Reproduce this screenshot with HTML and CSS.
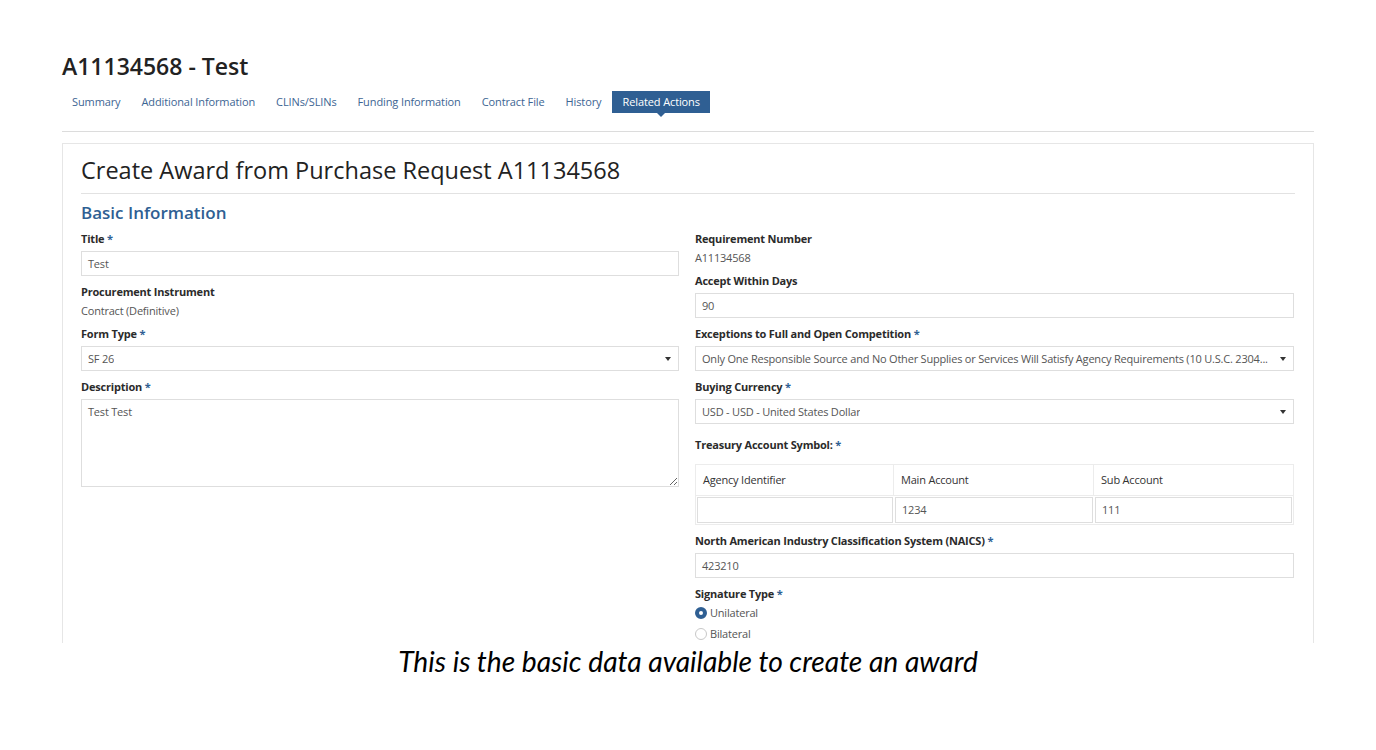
FILE: index.html
```html
<!DOCTYPE html>
<html lang="en">
<head>
<meta charset="utf-8">
<title>A11134568 - Test</title>
<link rel="stylesheet" href="styles.css">
</head>
<body>
<div class="shot">
  <div class="page">
    <h1 class="page-title">A11134568 - Test</h1>
    <nav class="tabs">
      <a class="tab">Summary</a>
      <a class="tab">Additional Information</a>
      <a class="tab">CLINs/SLINs</a>
      <a class="tab">Funding Information</a>
      <a class="tab">Contract File</a>
      <a class="tab">History</a>
      <a class="tab active">Related Actions</a>
    </nav>
    <div class="rule"></div>
    <section class="card">
      <h2 class="card-title">Create Award from Purchase Request A11134568</h2>
      <h3 class="section-title">Basic Information</h3>
      <div class="cols">
        <div class="col">
          <div class="field">
            <label class="lbl">Title <span class="req">*</span></label>
            <div class="input">Test</div>
          </div>
          <div class="field">
            <label class="lbl">Procurement Instrument</label>
            <div class="static">Contract (Definitive)</div>
          </div>
          <div class="field">
            <label class="lbl">Form Type <span class="req">*</span></label>
            <div class="input select"><span class="sel-text">SF 26</span><span class="caret"></span></div>
          </div>
          <div class="field">
            <label class="lbl">Description <span class="req">*</span></label>
            <textarea class="textarea">Test Test</textarea>
          </div>
        </div>
        <div class="col">
          <div class="field">
            <label class="lbl">Requirement Number</label>
            <div class="static">A11134568</div>
          </div>
          <div class="field">
            <label class="lbl">Accept Within Days</label>
            <div class="input">90</div>
          </div>
          <div class="field">
            <label class="lbl">Exceptions to Full and Open Competition <span class="req">*</span></label>
            <div class="input select"><span class="sel-text">Only One Responsible Source and No Other Supplies or Services Will Satisfy Agency Requirements (10 U.S.C. 2304...</span><span class="caret"></span></div>
          </div>
          <div class="field">
            <label class="lbl">Buying Currency <span class="req">*</span></label>
            <div class="input select"><span class="sel-text">USD - USD - United States Dollar</span><span class="caret"></span></div>
          </div>
          <div class="field field-tas">
            <label class="lbl">Treasury Account Symbol: <span class="req">*</span></label>
            <div class="tas">
              <div class="tas-head">Agency Identifier</div>
              <div class="tas-head">Main Account</div>
              <div class="tas-head">Sub Account</div>
              <div class="tas-cell"><div class="tas-input"></div></div>
              <div class="tas-cell"><div class="tas-input">1234</div></div>
              <div class="tas-cell"><div class="tas-input">111</div></div>
            </div>
          </div>
          <div class="field">
            <label class="lbl">North American Industry Classification System (NAICS) <span class="req">*</span></label>
            <div class="input">423210</div>
          </div>
          <div class="field">
            <label class="lbl">Signature Type <span class="req">*</span></label>
            <div class="radio"><span class="dot on"></span>Unilateral</div>
            <div class="radio"><span class="dot"></span>Bilateral</div>
          </div>
        </div>
      </div>
    </section>
  </div>
</div>
<p class="caption">This is the basic data available to create an award</p>
</body>
</html>
```

FILE: styles.css
```css
* { box-sizing: border-box; }

html, body {
  margin: 0;
  padding: 0;
  background: #ffffff;
}

body {
  font-family: "Open Sans", "Liberation Sans", sans-serif;
  color: #333333;
}

.shot {
  height: 643px;
  overflow: hidden;
}

.page {
  width: 1252px;
  margin: 0 auto;
  padding-top: 51px;
}

.page-title {
  margin: 0;
  font-size: 23px;
  font-weight: 600;
  line-height: 30px;
  color: #222222;
  letter-spacing: 0;
}

.tabs {
  display: flex;
  gap: 1px;
  margin-top: 10px;
  padding-left: 0;
}

.tab {
  position: relative;
  display: block;
  padding: 0 10px;
  height: 22px;
  line-height: 22px;
  font-size: 11px;
  color: #3d6593;
  letter-spacing: -0.11px;
}

.tab.active {
  background: #2f5f93;
  color: #ffffff;
}

.tab.active::after {
  content: "";
  position: absolute;
  left: 50%;
  bottom: -4px;
  margin-left: -4px;
  border-left: 4px solid transparent;
  border-right: 4px solid transparent;
  border-top: 4px solid #2f5f93;
}

.rule {
  margin-top: 18px;
  height: 1px;
  background: #dcdcdc;
}

.card {
  margin-top: 11px;
  border: 1px solid #e6e6e6;
  padding: 0 18px 40px;
  min-height: 600px;
}

.card-title {
  margin: 0;
  padding-top: 11px;
  padding-bottom: 8px;
  font-size: 23.5px;
  font-weight: 500;
  line-height: 30px;
  color: #222222;
  letter-spacing: 0;
  border-bottom: 1px solid #e2e2e2;
}

.section-title {
  margin: 0;
  padding-top: 8px;
  font-size: 17px;
  font-weight: 600;
  line-height: 22px;
  color: #2f5f93;
  letter-spacing: 0;
}

.cols {
  display: grid;
  grid-template-columns: 598px 599px;
  column-gap: 16px;
  margin-top: 7px;
}

.col {
  display: flex;
  flex-direction: column;
  gap: 8px;
}

.field {
  display: flex;
  flex-direction: column;
}

.lbl {
  display: block;
  font-size: 11px;
  font-weight: 700;
  line-height: 15px;
  color: #2b2b2b;
  margin-bottom: 5px;
  letter-spacing: -0.2px;
}

.req {
  color: #2f5f93;
}

.static {
  font-size: 11px;
  line-height: 15px;
  color: #555555;
  margin-top: -1px;
  letter-spacing: -0.2px;
}

.input {
  height: 25px;
  border: 1px solid #dedede;
  padding: 0 6px;
  font-size: 11px;
  line-height: 23px;
  color: #555555;
  letter-spacing: -0.2px;
  background: #ffffff;
}

.select {
  display: flex;
  align-items: center;
  justify-content: space-between;
}

.sel-text {
  white-space: nowrap;
  overflow: hidden;
}

.caret {
  flex: none;
  width: 0;
  height: 0;
  margin-left: 8px;
  margin-right: 1px;
  border-left: 3.5px solid transparent;
  border-right: 3.5px solid transparent;
  border-top: 4px solid #333333;
}

.textarea {
  display: block;
  width: 100%;
  height: 88px;
  margin: 0;
  border: 1px solid #dedede;
  border-radius: 0;
  padding: 4px 6px;
  font-family: "Open Sans", "Liberation Sans", sans-serif;
  font-size: 11px;
  line-height: 15px;
  color: #555555;
  letter-spacing: -0.2px;
  resize: vertical;
  outline: none;
}

.field-tas {
  margin-top: 5px;
}

.field-tas .lbl {
  margin-bottom: 12px;
}

.tas {
  display: grid;
  grid-template-columns: 198px 200px 1fr;
  border: 1px solid #ececec;
  background: #ffffff;
}

.tas-head {
  height: 31px;
  padding: 0 7px;
  font-size: 11px;
  line-height: 30px;
  color: #333333;
  letter-spacing: -0.2px;
  border-right: 1px solid #ececec;
  border-bottom: 1px solid #ececec;
}

.tas-head:nth-child(3) {
  border-right: 0;
}

.tas-cell {
  padding: 1px;
}

.tas-input {
  height: 26px;
  border: 1px solid #dedede;
  padding: 0 6px;
  font-size: 11px;
  line-height: 24px;
  color: #555555;
  letter-spacing: -0.2px;
}

.radio {
  display: flex;
  align-items: center;
  height: 21px;
  font-size: 11px;
  color: #555555;
  letter-spacing: -0.2px;
  margin-top: -4px;
}

.radio + .radio {
  margin-top: 0;
}

.dot {
  flex: none;
  width: 12px;
  height: 12px;
  border-radius: 50%;
  border: 1px solid #c8c8c8;
  background: #ffffff;
  margin-right: 3px;
}

.dot.on {
  border: 4px solid #2f5f93;
  background: #ffffff;
}

.caption {
  margin: 3px 0 0;
  text-align: center;
  font-family: Lato, "Open Sans", sans-serif;
  font-style: italic;
  font-size: 28.2px;
  line-height: 30px;
  color: #000000;
}
```
